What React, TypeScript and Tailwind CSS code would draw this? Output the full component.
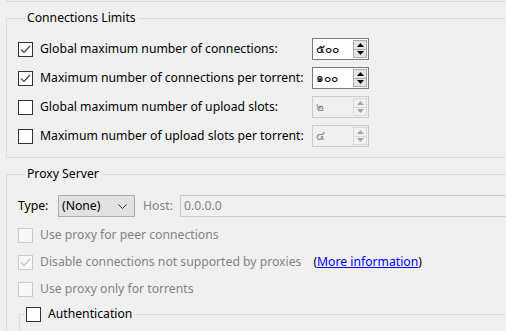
import React from "react";

const font = { fontFamily: '"Noto Sans", "DejaVu Sans", sans-serif' };

function Check({ checked, disabled }: { checked?: boolean; disabled?: boolean }) {
  return (
    <span
      className={`flex h-[15px] w-[15px] shrink-0 items-center justify-center border ${
        disabled ? "border-[#cccccc] bg-[#f7f7f7]" : "border-[#333333] bg-white"
      }`}
    >
      {checked ? (
        <svg width="11" height="9" viewBox="0 0 11 9">
          <path d="M1 4.5 L4 7.5 L10 1" fill="none" stroke={disabled ? "#c4c4c4" : "#444444"} strokeWidth="1.2" />
        </svg>
      ) : null}
    </span>
  );
}

function Arrow({ up, color }: { up?: boolean; color: string }) {
  return (
    <svg width="7" height="4" viewBox="0 0 7 4">
      <path d={up ? "M0 4 L3.5 0 L7 4 Z" : "M0 0 L7 0 L3.5 4 Z"} fill={color} />
    </svg>
  );
}

function Spin({ value, disabled }: { value: string; disabled?: boolean }) {
  const btn = disabled
    ? "border-[#d9d9d9] bg-[#f0f0f0]"
    : "border-[#adadad] bg-[#e5e5e5]";
  const arrow = disabled ? "#a6a6a6" : "#000000";
  return (
    <div
      className={`flex h-[22px] w-[57px] shrink-0 items-stretch border ${
        disabled ? "border-[#cccccc] bg-[#f0f0f0] text-[#8a8a8a]" : "border-[#7a7a7a] bg-white text-black"
      }`}
    >
      <span className="flex flex-1 items-center pl-[3px] text-[12px]">{value}</span>
      <div className="flex w-[15px] flex-col py-[1px] pr-[1px]">
        <div className={`flex flex-1 items-center justify-center border ${btn}`}>
          <Arrow up color={arrow} />
        </div>
        <div className={`flex flex-1 items-center justify-center border border-t-0 ${btn}`}>
          <Arrow color={arrow} />
        </div>
      </div>
    </div>
  );
}

function LimitRow({ label, value, checked }: { label: string; value: string; checked?: boolean }) {
  return (
    <div className="grid h-[22px] w-[351px] grid-cols-[15px_1fr_57px] items-center">
      <Check checked={checked} />
      <span className="ml-[7px] whitespace-nowrap text-black">{label}</span>
      <Spin value={value} disabled={!checked} />
    </div>
  );
}

function ProxyRow({ label, checked, children }: { label: string; checked?: boolean; children?: React.ReactNode }) {
  return (
    <div className="flex h-[20px] items-center">
      <Check checked={checked} disabled />
      <span className="ml-[7px] whitespace-nowrap text-[#838383]">{label}</span>
      {children}
    </div>
  );
}

export default function App() {
  return (
    <div className="h-[331px] w-[506px] overflow-hidden bg-[#f0f0f0] text-[12.2px]" style={font}>
      <div className="ml-[6px] h-[2px] w-[520px] border-b border-l border-[#dcdcdc]" />

      <fieldset className="ml-[6px] mt-[8px] w-[520px] border border-[#dcdcdc] pb-[10px] pl-[11px] pt-[12px]">
        <legend className="ml-[7px] px-[2px] leading-[16px] text-black">Connections Limits</legend>
        <div className="flex flex-col gap-[7px]">
          <LimitRow label="Global maximum number of connections:" value="๕๐๐" checked />
          <LimitRow label="Maximum number of connections per torrent:" value="๑๐๐" checked />
          <LimitRow label="Global maximum number of upload slots:" value="๒" />
          <LimitRow label="Maximum number of upload slots per torrent:" value="๔" />
        </div>
      </fieldset>

      <fieldset className="ml-[6px] mt-[8px] h-[200px] w-[520px] border border-[#dcdcdc] pl-[11px] pt-[13px]">
        <legend className="ml-[7px] px-[2px] leading-[16px] text-black">Proxy Server</legend>
        <div className="flex h-[22px] items-center">
          <span className="w-[40px] text-black">Type:</span>
          <div className="flex h-[22px] w-[77px] items-center justify-between border border-[#adadad] bg-[#e1e1e1] pl-[3px] pr-[7px]">
            <span className="text-black">(None)</span>
            <svg width="9" height="5" viewBox="0 0 9 5">
              <path d="M0.5 0.5 L4.5 4.5 L8.5 0.5" fill="none" stroke="#333333" strokeWidth="1" />
            </svg>
          </div>
          <span className="ml-[8px] w-[37px] text-[#838383]">Host:</span>
          <div className="flex h-[22px] flex-1 items-center border border-[#cccccc] bg-[#f0f0f0] pl-[3px]">
            <span className="text-[#838383]">0.0.0.0</span>
          </div>
        </div>

        <div className="mt-[8px] flex flex-col gap-[7px]">
          <ProxyRow label="Use proxy for peer connections" />
          <ProxyRow label="Disable connections not supported by proxies" checked>
            <span className="ml-[12px] whitespace-nowrap text-black">
              (<span className="text-[#0000ff] underline">More information</span>)
            </span>
          </ProxyRow>
          <ProxyRow label="Use proxy only for torrents" />
        </div>

        <fieldset className="ml-[1px] mt-[7px] h-[60px] border border-[#dcdcdc]">
          <legend className="ml-[5px] flex items-center px-[1px] leading-[16px]">
            <Check />
            <span className="ml-[7px] pr-[3px] text-black">Authentication</span>
          </legend>
        </fieldset>
      </fieldset>
    </div>
  );
}
